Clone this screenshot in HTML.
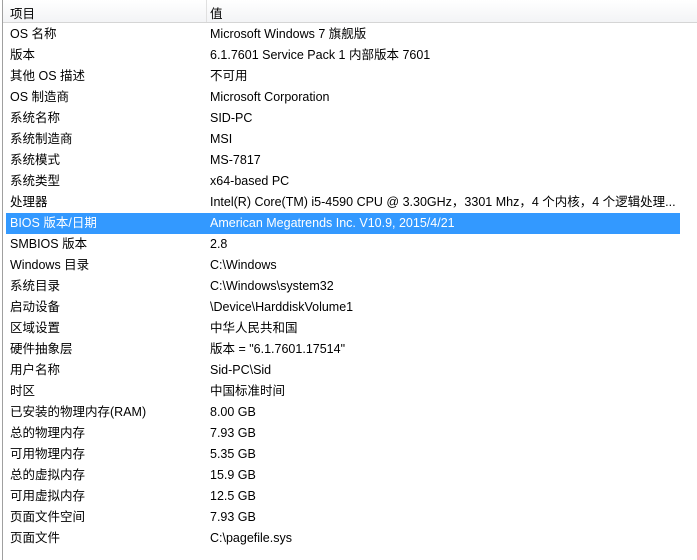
<!DOCTYPE html><html><head><meta charset="utf-8"><style>
body{margin:0;width:697px;height:560px;background:#fff;overflow:hidden;font-family:"Liberation Sans","Noto Sans CJK SC",sans-serif;font-size:12.5px;color:#000;position:relative}
.lb{position:absolute;left:2px;top:0;width:1px;height:560px;background:#a0a0a0}
.hd{position:absolute;left:3px;top:0;width:694px;height:22px;background:linear-gradient(#fff,#f3f4f6);border-bottom:1px solid #d5d5d5}
.hd span{position:absolute;top:3px}
.sep{position:absolute;left:203px;top:0;width:1px;height:22px;background:#e0e0e0}
.r{position:absolute;left:6px;width:674px;height:21px;line-height:23px}
.r span{position:absolute;left:4px;white-space:nowrap}
.r span+span{left:204px}
.sel{background:#3399ff;color:#fff;line-height:21px}
</style></head><body>
<div class="lb"></div>
<div class="hd"><span style="left:7px">项目</span><div class="sep"></div><span style="left:207px">值</span></div>
<div class="r" style="top:23px"><span>OS 名称</span><span>Microsoft Windows 7 旗舰版</span></div>
<div class="r" style="top:44px"><span>版本</span><span>6.1.7601 Service Pack 1 内部版本 7601</span></div>
<div class="r" style="top:65px"><span>其他 OS 描述</span><span>不可用</span></div>
<div class="r" style="top:86px"><span>OS 制造商</span><span>Microsoft Corporation</span></div>
<div class="r" style="top:107px"><span>系统名称</span><span>SID-PC</span></div>
<div class="r" style="top:128px"><span>系统制造商</span><span>MSI</span></div>
<div class="r" style="top:149px"><span>系统模式</span><span>MS-7817</span></div>
<div class="r" style="top:170px"><span>系统类型</span><span>x64-based PC</span></div>
<div class="r" style="top:191px"><span>处理器</span><span>Intel(R) Core(TM) i5-4590 CPU @ 3.30GHz，3301 Mhz，4 个内核，4 个逻辑处理...</span></div>
<div class="r sel" style="top:213px"><span>BIOS 版本/日期</span><span>American Megatrends Inc. V10.9, 2015/4/21</span></div>
<div class="r" style="top:233px"><span>SMBIOS 版本</span><span>2.8</span></div>
<div class="r" style="top:254px"><span>Windows 目录</span><span>C:\Windows</span></div>
<div class="r" style="top:275px"><span>系统目录</span><span>C:\Windows\system32</span></div>
<div class="r" style="top:296px"><span>启动设备</span><span>\Device\HarddiskVolume1</span></div>
<div class="r" style="top:317px"><span>区域设置</span><span>中华人民共和国</span></div>
<div class="r" style="top:338px"><span>硬件抽象层</span><span>版本 = "6.1.7601.17514"</span></div>
<div class="r" style="top:359px"><span>用户名称</span><span>Sid-PC\Sid</span></div>
<div class="r" style="top:380px"><span>时区</span><span>中国标准时间</span></div>
<div class="r" style="top:401px"><span>已安装的物理内存(RAM)</span><span>8.00 GB</span></div>
<div class="r" style="top:422px"><span>总的物理内存</span><span>7.93 GB</span></div>
<div class="r" style="top:443px"><span>可用物理内存</span><span>5.35 GB</span></div>
<div class="r" style="top:464px"><span>总的虚拟内存</span><span>15.9 GB</span></div>
<div class="r" style="top:485px"><span>可用虚拟内存</span><span>12.5 GB</span></div>
<div class="r" style="top:506px"><span>页面文件空间</span><span>7.93 GB</span></div>
<div class="r" style="top:527px"><span>页面文件</span><span>C:\pagefile.sys</span></div>
</body></html>
